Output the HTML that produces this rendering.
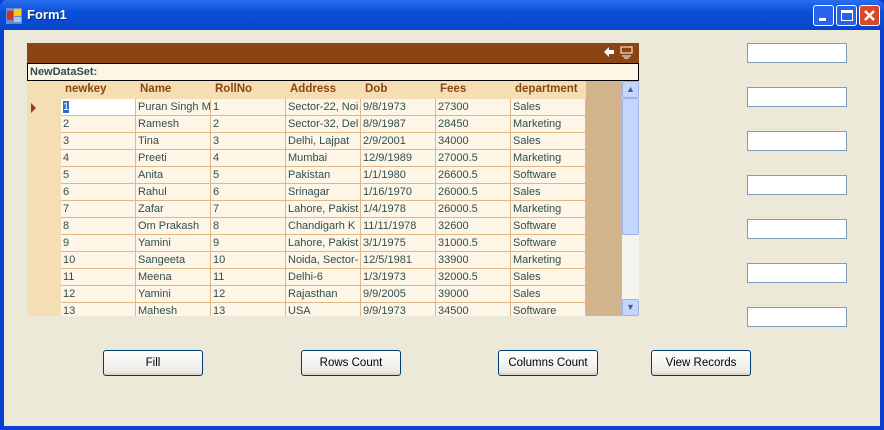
<!DOCTYPE html><html><head><style>
*{margin:0;padding:0;box-sizing:border-box}
body{width:884px;height:430px;overflow:hidden;font-family:"Liberation Sans",sans-serif;font-size:11px;background:#0a3fd0;position:relative}
.title{position:absolute;left:0;top:0;width:884px;height:30px;background:linear-gradient(#2a6ef0,#0a50d8 40%,#0846c8);border-radius:7px 7px 0 0}
.title span{position:absolute;left:27px;top:7px;color:#fff;font-weight:bold;font-size:13px;font-family:"Liberation Sans",sans-serif;text-shadow:1px 1px #0a2a80}
.client{position:absolute;left:4px;top:30px;width:876px;height:396px;background:#ECE9D8}
.wb{position:absolute;top:5px;width:21px;height:21px;border:1px solid #fff;border-radius:3px;background:#2a62e8}
.grid{position:absolute;left:27px;top:43px;width:612px;height:273px;background:#D2B48C;overflow:hidden}
.cap{position:absolute;left:0;top:0;width:612px;height:20px;background:#8B4513}
.ds{position:absolute;left:0;top:20px;width:612px;height:18px;background:#FDF5E6;border:1px solid #000;font-weight:bold;color:#2F4F4F;padding:2px 2px;font-size:11px}
.rh{position:absolute;left:0;top:38px;width:34px;height:235px;background:#F5DEB3}
.hdr{position:absolute;left:34px;top:38px;height:18px;width:525px;background:#F5DEB3}
.hdr div{position:absolute;top:2px;font-weight:bold;color:#8B4513;font-size:11.5px}
.row{position:absolute;left:34px;height:17px;width:525px}
.row div{position:absolute;top:0;height:17px;width:75px;background:#FDF5E6;border-right:1px solid #DEB887;border-bottom:1px solid #DEB887;color:#2F4F4F;padding:2px 2px;white-space:nowrap;overflow:hidden}
.sb{position:absolute;left:595px;top:38px;width:17px;height:235px;background:#f4f3ee}
.tb{position:absolute;left:747px;width:100px;height:20px;background:#fff;border:1px solid #7F9DB9}
.btn{position:absolute;top:350px;width:100px;height:26px;border:1px solid #003C74;border-radius:3px;background:linear-gradient(#fff,#ECEBE6 85%,#D6D0C5);text-align:center;line-height:24px;font-size:11.5px;color:#000}
</style></head><body>
<div class="title"><svg style="position:absolute;left:6px;top:8px" width="16" height="16"><rect x="0" y="0" width="16" height="16" fill="#6a8ccc"/><rect x="1" y="3" width="6" height="9" fill="#d83020"/><rect x="8" y="1" width="7" height="7" fill="#f8c820"/><rect x="8" y="9" width="7" height="5" fill="#a8c8f0"/></svg><span>Form1</span></div>
<div class="wb" style="left:813px"><div style="position:absolute;left:5px;top:12px;width:7px;height:3px;background:#fff"></div></div>
<div class="wb" style="left:836px"><div style="position:absolute;left:4px;top:4px;width:12px;height:11px;border:1px solid #fff;border-top-width:3px"></div></div>
<div class="wb" style="left:859px;background:#d8482a"><svg width="19" height="19"><path d="M5 5L14 14M14 5L5 14" stroke="#fff" stroke-width="2.5"/></svg></div>
<div class="client"></div>
<div class="grid">
<div class="cap"><svg style="position:absolute;left:576px;top:3px" width="32" height="14"><path d="M1 6L6 1V4H11V8H6V11Z" fill="#fff"/><rect x="18" y="1" width="11" height="6" fill="none" stroke="#fff"/><path d="M19 10H28M21 12h5" stroke="#fff"/></svg></div>
<div class="ds">NewDataSet:</div>
<div class="rh"><svg style="position:absolute;left:4px;top:22px" width="6" height="10"><path d="M0 0L5 5L0 10Z" fill="#8B4513"/></svg></div>
<div class="hdr"><div style="left:4px">newkey</div><div style="left:79px">Name</div><div style="left:154px">RollNo</div><div style="left:229px">Address</div><div style="left:304px">Dob</div><div style="left:379px">Fees</div><div style="left:454px">department</div></div>
<div id="rows"></div>
<div class="sb">
<div style="position:absolute;left:0;top:0;width:17px;height:17px;background:#c4d6fc;border:1px solid #9cb4ec;border-radius:2px;text-align:center;color:#4d6185;font-size:9px;line-height:15px">&#9650;</div>
<div style="position:absolute;left:0;top:17px;width:17px;height:137px;background:#c4d6fc;border:1px solid #9cb4ec;border-radius:2px"></div>
<div style="position:absolute;left:0;top:218px;width:17px;height:17px;background:#c4d6fc;border:1px solid #9cb4ec;border-radius:2px;text-align:center;color:#4d6185;font-size:9px;line-height:15px">&#9660;</div>
</div>
</div>
<div class="tb" style="top:43px"></div><div class="tb" style="top:87px"></div><div class="tb" style="top:131px"></div><div class="tb" style="top:175px"></div><div class="tb" style="top:219px"></div><div class="tb" style="top:263px"></div><div class="tb" style="top:307px"></div>
<div class="btn" style="left:103px">Fill</div>
<div class="btn" style="left:301px">Rows Count</div>
<div class="btn" style="left:498px">Columns Count</div>
<div class="btn" style="left:651px">View Records</div>
<script>
var d=[["1","Puran Singh M","1","Sector-22, Noi","9/8/1973","27300","Sales"],["2","Ramesh","2","Sector-32, Del","8/9/1987","28450","Marketing"],["3","Tina","3","Delhi, Lajpat","2/9/2001","34000","Sales"],["4","Preeti","4","Mumbai","12/9/1989","27000.5","Marketing"],["5","Anita","5","Pakistan","1/1/1980","26600.5","Software"],["6","Rahul","6","Srinagar","1/16/1970","26000.5","Sales"],["7","Zafar","7","Lahore, Pakist","1/4/1978","26000.5","Marketing"],["8","Om Prakash","8","Chandigarh K","11/11/1978","32600","Software"],["9","Yamini","9","Lahore, Pakist","3/1/1975","31000.5","Software"],["10","Sangeeta","10","Noida, Sector-","12/5/1981","33900","Marketing"],["11","Meena","11","Delhi-6","1/3/1973","32000.5","Sales"],["12","Yamini","12","Rajasthan","9/9/2005","39000","Sales"],["13","Mahesh","13","USA","9/9/1973","34500","Software"]];
var h="";d.forEach(function(r,i){h+='<div class="row" style="top:'+(56+i*17)+'px">';r.forEach(function(c,j){var s=(i==0&&j==0)?'background:#fff':'';var t=(i==0&&j==0)?'<span style="background:#316AC5;color:#fff">1</span>':c;h+='<div style="left:'+(j*75)+'px;'+s+'">'+t+'</div>'});h+='</div>'});document.getElementById('rows').innerHTML=h;
</script>
</body></html>
